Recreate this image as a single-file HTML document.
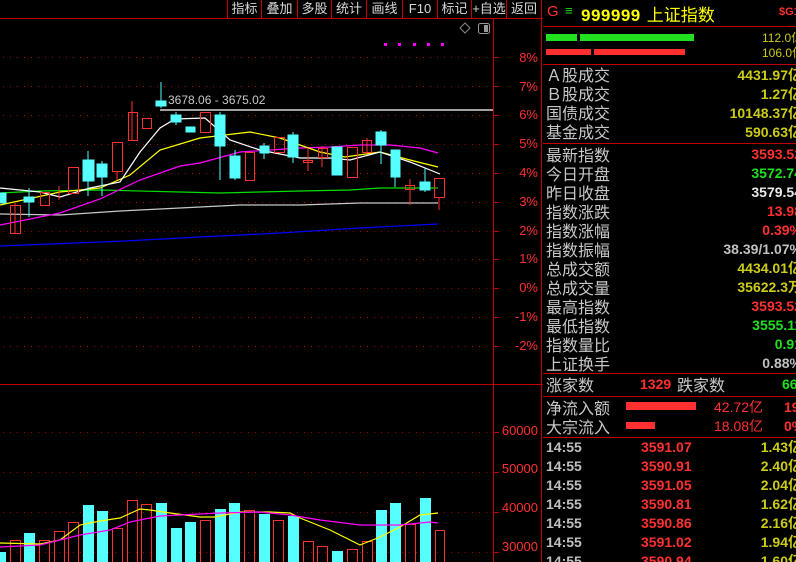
<!DOCTYPE html>
<html><head><meta charset="utf-8"><style>
*{margin:0;padding:0;box-sizing:border-box}
body{width:796px;height:562px;background:#000;overflow:hidden;position:relative;font-family:"Liberation Sans","Noto Sans CJK SC",sans-serif}
.t{position:absolute;white-space:nowrap}
.lab{position:absolute;left:546px;font-size:16px;color:#c8c8c8;line-height:19px;font-family:"Noto Sans CJK SC","WenQuanYi Zen Hei",sans-serif}
.val{position:absolute;right:-6px;font-size:14px;font-weight:bold;line-height:19px;text-align:right;white-space:nowrap}
.y{color:#cccc18}.r{color:#ff3030}.g{color:#20e020}.w{color:#e8e8e8}.gr{color:#c0c0c0}
.tb{position:absolute;top:0;height:18px;font-size:13px;color:#d8d8d8;line-height:18px;text-align:center;border-left:1px solid #c00000}
</style></head><body>
<svg width="796" height="562" style="position:absolute;left:0;top:0">
<g stroke="#c00000" stroke-width="1" fill="none">
<line x1="0" y1="18.5" x2="543" y2="18.5"/>
<line x1="493.5" y1="18" x2="493.5" y2="562"/>
<line x1="0" y1="384.5" x2="543" y2="384.5"/>
<line x1="541.5" y1="0" x2="541.5" y2="562"/>
<line x1="543" y1="26.5" x2="796" y2="26.5"/>
<line x1="543" y1="64.5" x2="796" y2="64.5"/>
<line x1="543" y1="143.5" x2="796" y2="143.5"/>
<line x1="543" y1="373.5" x2="796" y2="373.5"/>
<line x1="543" y1="396.5" x2="796" y2="396.5"/>
<line x1="543" y1="437.5" x2="796" y2="437.5"/>
</g>
<g stroke="#b00000" stroke-dasharray="1,6" stroke-width="1">
<line x1="3" y1="57.5" x2="493" y2="57.5"/><line x1="3" y1="86.5" x2="493" y2="86.5"/><line x1="3" y1="115.5" x2="493" y2="115.5"/><line x1="3" y1="144.5" x2="493" y2="144.5"/><line x1="3" y1="173.5" x2="493" y2="173.5"/><line x1="3" y1="202.5" x2="493" y2="202.5"/><line x1="3" y1="231.5" x2="493" y2="231.5"/><line x1="3" y1="259.5" x2="493" y2="259.5"/><line x1="3" y1="288.5" x2="493" y2="288.5"/><line x1="3" y1="317.5" x2="493" y2="317.5"/><line x1="3" y1="346.5" x2="493" y2="346.5"/>
<line x1="3" y1="432.5" x2="493" y2="432.5"/><line x1="3" y1="472.5" x2="493" y2="472.5"/><line x1="3" y1="512.5" x2="493" y2="512.5"/><line x1="3" y1="552.5" x2="493" y2="552.5"/>
</g>
<g stroke="#c00000"><line x1="493" y1="57.5" x2="499" y2="57.5"/><line x1="493" y1="86.5" x2="499" y2="86.5"/><line x1="493" y1="115.5" x2="499" y2="115.5"/><line x1="493" y1="144.5" x2="499" y2="144.5"/><line x1="493" y1="173.5" x2="499" y2="173.5"/><line x1="493" y1="202.5" x2="499" y2="202.5"/><line x1="493" y1="231.5" x2="499" y2="231.5"/><line x1="493" y1="259.5" x2="499" y2="259.5"/><line x1="493" y1="288.5" x2="499" y2="288.5"/><line x1="493" y1="317.5" x2="499" y2="317.5"/><line x1="493" y1="346.5" x2="499" y2="346.5"/><line x1="493" y1="432.5" x2="499" y2="432.5"/><line x1="493" y1="472.5" x2="499" y2="472.5"/><line x1="493" y1="512.5" x2="499" y2="512.5"/><line x1="493" y1="552.5" x2="499" y2="552.5"/></g>
<line x1="160" y1="110" x2="493" y2="110" stroke="#a0a0a0" stroke-width="2"/>
<g fill="none" stroke-width="1.2">
<polyline stroke="#0000ff" points="0,246 125,241 200,237 280,233 360,228 438,224"/>
<polyline stroke="#c8c8c8" points="0,214 60,215 120,211 180,208 240,205 300,205 360,203 420,203 438,203"/>
<polyline stroke="#00e000" points="0,193 40,191 100,190 180,192 220,193 300,191 350,190 380,188 438,188"/>
<polyline stroke="#ff00ff" points="0,225 60,213 100,199 140,180 180,166 200,163 240,152 270,150 300,148 330,147 360,145 390,145 420,148 438,153"/>
<polyline stroke="#ffff00" points="0,205 60,192 100,188 130,175 160,150 200,138 250,132 280,138 300,145 320,152 345,157 380,152 410,160 438,167"/>
<polyline stroke="#ffffff" points="0,188 40,192 60,197 90,188 120,182 140,152 160,128 175,119 205,118 230,140 260,150 300,158 330,158 350,160 380,152 410,162 440,174"/>
</g>
<g stroke-width="1">
<g fill="#55ffff" stroke="#55ffff">
<rect x="0" y="193" width="6" height="10"/>
<line x1="29" y1="188" x2="29" y2="217"/><rect x="24" y="197" width="10" height="5"/>
<line x1="88" y1="151" x2="88" y2="196"/><rect x="83" y="160" width="11" height="21"/>
<line x1="102" y1="161" x2="102" y2="196"/><rect x="97" y="164" width="10" height="13"/>
<line x1="161" y1="82" x2="161" y2="108"/><rect x="156" y="101" width="10" height="5"/>
<line x1="176" y1="112" x2="176" y2="125"/><rect x="171" y="115" width="10" height="7"/>
<rect x="186" y="127" width="9" height="5"/>
<line x1="220" y1="112" x2="220" y2="180"/><rect x="215" y="115" width="10" height="31"/>
<line x1="235" y1="150" x2="235" y2="180"/><rect x="230" y="156" width="10" height="22"/>
<line x1="264" y1="143" x2="264" y2="159"/><rect x="260" y="146" width="9" height="7"/>
<line x1="293" y1="132" x2="293" y2="163"/><rect x="288" y="135" width="10" height="22"/>
<rect x="332" y="147" width="10" height="28"/>
<line x1="381" y1="130" x2="381" y2="164"/><rect x="376" y="132" width="10" height="13"/>
<line x1="395" y1="150" x2="395" y2="187"/><rect x="391" y="150" width="9" height="27"/>
<line x1="425" y1="168" x2="425" y2="192"/><rect x="420" y="182" width="10" height="8"/>
</g>
<g fill="none" stroke="#ff3030">
<line x1="15" y1="203" x2="15" y2="234"/><rect x="10.5" y="205.5" width="10" height="28"/>
<rect x="40.5" y="192.5" width="9" height="13"/>
<line x1="59" y1="186" x2="59" y2="200"/>
<rect x="68.5" y="167.5" width="10" height="26"/>
<line x1="117" y1="171" x2="117" y2="180"/><rect x="112.5" y="142.5" width="10" height="29"/>
<line x1="132" y1="101" x2="132" y2="141"/><rect x="128.5" y="112.5" width="9" height="28"/>
<rect x="142.5" y="118.5" width="9" height="10"/>
<rect x="200.5" y="112.5" width="10" height="20"/>
<rect x="245.5" y="152.5" width="9" height="28"/>
<rect x="274.5" y="137.5" width="10" height="15"/>
<line x1="308" y1="148" x2="308" y2="171"/><rect x="303.5" y="160.5" width="9" height="2"/>
<line x1="322" y1="146" x2="322" y2="167"/><rect x="318.5" y="148.5" width="9" height="9"/>
<rect x="347.5" y="147.5" width="10" height="30"/>
<line x1="367" y1="138" x2="367" y2="152"/><rect x="362.5" y="140.5" width="9" height="12"/>
<line x1="410" y1="179" x2="410" y2="205"/><rect x="405.5" y="185.5" width="9" height="4"/>
<line x1="439" y1="197" x2="439" y2="210"/><rect x="434.5" y="178.5" width="10" height="19"/>
</g>
</g>
<g fill="#55ffff">
<rect x="0" y="552" width="6" height="10"/><rect x="24" y="533" width="11" height="29"/><rect x="83" y="505" width="11" height="57"/><rect x="97" y="511" width="11" height="51"/><rect x="156" y="503" width="11" height="59"/><rect x="171" y="528" width="11" height="34"/><rect x="185" y="522" width="11" height="40"/><rect x="215" y="509" width="11" height="53"/><rect x="229" y="503" width="11" height="59"/><rect x="259" y="514" width="11" height="48"/><rect x="288" y="516" width="11" height="46"/><rect x="332" y="551" width="11" height="11"/><rect x="376" y="510" width="11" height="52"/><rect x="390" y="503" width="11" height="59"/><rect x="420" y="498" width="11" height="64"/>
</g>
<g fill="none" stroke="#ff3030">
<rect x="10.5" y="540.5" width="10" height="30"/><rect x="39.5" y="540.5" width="10" height="30"/><rect x="54.5" y="531.5" width="10" height="40"/><rect x="68.5" y="522.5" width="10" height="50"/><rect x="112.5" y="528.5" width="10" height="40"/><rect x="127.5" y="500.5" width="10" height="70"/><rect x="141.5" y="504.5" width="10" height="70"/><rect x="200.5" y="520.5" width="10" height="50"/><rect x="244.5" y="510.5" width="10" height="60"/><rect x="273.5" y="520.5" width="10" height="50"/><rect x="303.5" y="541.5" width="10" height="30"/><rect x="317.5" y="546.5" width="10" height="30"/><rect x="347.5" y="549.5" width="10" height="30"/><rect x="362.5" y="541.5" width="10" height="30"/><rect x="405.5" y="524.5" width="10" height="40"/><rect x="435.5" y="530.5" width="9" height="40"/>
</g>
<g fill="none" stroke-width="1.2">
<polyline stroke="#ffff00" points="0,543 40,544 60,540 80,525 100,521 120,518 140,509 150,510 170,513 200,517 215,517 240,512 270,512 290,513 300,518 330,530 360,545 380,537 400,527 420,515 438,513"/>
<polyline stroke="#ff00ff" points="0,547 40,545 80,535 110,530 130,522 160,516 200,514 220,513 260,512 290,515 320,520 360,525 400,525 430,522 438,523"/>
</g>
<path d="M465 23 L470 28 L465 33 L460 28 Z" fill="none" stroke="#888"/>
<rect x="478.5" y="23.5" width="11" height="10" rx="2" fill="none" stroke="#999"/><rect x="484" y="25" width="4" height="7" fill="#999"/>
<g fill="#ff00ff"><rect x="384" y="43" width="3" height="3"/><rect x="398" y="43" width="3" height="3"/><rect x="413" y="43" width="3" height="3"/><rect x="427" y="43" width="3" height="3"/><rect x="441" y="43" width="3" height="3"/></g>
<rect x="546" y="34" width="31" height="7" fill="#20e020"/><rect x="580" y="34" width="114" height="7" fill="#20e020"/>
<rect x="546" y="49" width="45" height="6" fill="#ff3030"/><rect x="594" y="49" width="91" height="6" fill="#ff3030"/>
<rect x="626" y="402" width="70" height="8" fill="#ff3030"/><rect x="626" y="422" width="29" height="7" fill="#ff3030"/>
</svg>
<div class="tb" style="left:227px;width:34px">指标</div>
<div class="tb" style="left:261px;width:36px">叠加</div>
<div class="tb" style="left:297px;width:34px">多股</div>
<div class="tb" style="left:331px;width:35px">统计</div>
<div class="tb" style="left:366px;width:36px">画线</div>
<div class="tb" style="left:402px;width:35px">F10</div>
<div class="tb" style="left:437px;width:34px">标记</div>
<div class="tb" style="left:471px;width:35px">+自选</div>
<div class="tb" style="left:506px;width:35px">返回</div>
<div class="t" style="left:168px;top:93px;font-size:12px;color:#c8c8c8">3678.06 - 3675.02</div>
<div style="position:absolute;left:500px;top:0;width:40px;font-size:13px;color:#ff3030;text-align:right">
<div class="t" style="right:2px;top:50px">8%</div><div class="t" style="right:2px;top:79px">7%</div><div class="t" style="right:2px;top:107px">6%</div><div class="t" style="right:2px;top:136px">5%</div><div class="t" style="right:2px;top:165px">4%</div><div class="t" style="right:2px;top:194px">3%</div><div class="t" style="right:2px;top:223px">2%</div><div class="t" style="right:2px;top:251px">1%</div><div class="t" style="right:2px;top:280px">0%</div><div class="t" style="right:2px;top:309px">-1%</div><div class="t" style="right:2px;top:338px">-2%</div>
<div class="t" style="right:2px;top:423px">60000</div><div class="t" style="right:2px;top:461px">50000</div><div class="t" style="right:2px;top:500px">40000</div><div class="t" style="right:2px;top:539px">30000</div>
</div>
<div style="position:absolute;left:543px;top:0;width:253px;height:562px;overflow:hidden">
<div class="t" style="left:4px;top:3px;font-size:15px;color:#ff3030">G</div>
<div class="t" style="left:22px;top:3px;font-size:13px;color:#20e020">≡</div>
<div class="t" style="left:38px;top:1px;height:24px;display:flex;align-items:baseline;color:#ffff00;font-size:17px">
<span style="font-weight:bold;letter-spacing:0.5px">999999</span><span style="margin-left:6px;font-family:'Noto Sans CJK SC',sans-serif;font-size:17px">上证指数</span></div>
<div class="t" style="left:236px;top:6px;font-size:11px;color:#ff3030;font-weight:bold">$G1</div>
<div class="t" style="left:219px;top:29px;font-size:12px;color:#cccc18">112.0亿</div>
<div class="t" style="left:219px;top:44px;font-size:12px;color:#cccc18">106.0亿</div>
</div>
<div style="position:absolute;left:543px;top:0;width:253px;height:562px;overflow:hidden">
<div class="lab" style="left:3px;top:65px">Ａ股成交</div><div class="val y" style="top:66px">4431.97亿</div>
<div class="lab" style="left:3px;top:84px">Ｂ股成交</div><div class="val y" style="top:85px">1.27亿</div>
<div class="lab" style="left:3px;top:103px">国债成交</div><div class="val y" style="top:104px">10148.37亿</div>
<div class="lab" style="left:3px;top:122px">基金成交</div><div class="val y" style="top:123px">590.63亿</div>
<div class="lab" style="left:3px;top:145px">最新指数</div><div class="val r" style="top:145px">3593.52</div>
<div class="lab" style="left:3px;top:164px">今日开盘</div><div class="val g" style="top:164px">3572.74</div>
<div class="lab" style="left:3px;top:183px">昨日收盘</div><div class="val w" style="top:183px">3579.54</div>
<div class="lab" style="left:3px;top:202px">指数涨跌</div><div class="val r" style="top:202px">13.98</div>
<div class="lab" style="left:3px;top:221px">指数涨幅</div><div class="val r" style="top:221px">0.39%</div>
<div class="lab" style="left:3px;top:240px">指数振幅</div><div class="val gr" style="top:240px">38.39/1.07%</div>
<div class="lab" style="left:3px;top:259px">总成交额</div><div class="val y" style="top:259px">4434.01亿</div>
<div class="lab" style="left:3px;top:278px">总成交量</div><div class="val y" style="top:278px">35622.3万</div>
<div class="lab" style="left:3px;top:297px">最高指数</div><div class="val r" style="top:297px">3593.52</div>
<div class="lab" style="left:3px;top:316px">最低指数</div><div class="val g" style="top:316px">3555.11</div>
<div class="lab" style="left:3px;top:335px">指数量比</div><div class="val g" style="top:335px">0.91</div>
<div class="lab" style="left:3px;top:354px">上证换手</div><div class="val gr" style="top:354px">0.88%</div>
<div class="lab" style="left:3px;top:375px">涨家数</div>
<div class="val r" style="right:auto;left:97px;top:375px">1329</div>
<div class="lab" style="left:134px;top:375px">跌家数</div>
<div class="val g" style="right:auto;left:239px;top:375px">66</div>
<div class="lab" style="left:3px;top:398px">净流入额</div><div class="val r" style="right:auto;left:171px;top:398px;font-weight:normal;font-size:14px">42.72亿</div><div class="val r" style="right:auto;left:241px;top:398px">19</div>
<div class="lab" style="left:3px;top:417px">大宗流入</div><div class="val r" style="right:auto;left:171px;top:417px;font-weight:normal;font-size:14px">18.08亿</div><div class="val r" style="right:auto;left:241px;top:417px">0%</div>
</div>
<div style="position:absolute;left:543px;top:438px;width:253px;height:124px;overflow:hidden;font-size:14px;font-weight:bold;line-height:19.2px">
<div class="t gr" style="left:3px;top:0">14:55</div><div class="t r" style="left:98px;top:0">3591.07</div><div class="t y" style="right:-6px;top:0">1.43亿</div>
<div class="t gr" style="left:3px;top:19px">14:55</div><div class="t r" style="left:98px;top:19px">3590.91</div><div class="t y" style="right:-6px;top:19px">2.40亿</div>
<div class="t gr" style="left:3px;top:38px">14:55</div><div class="t r" style="left:98px;top:38px">3591.05</div><div class="t y" style="right:-6px;top:38px">2.04亿</div>
<div class="t gr" style="left:3px;top:57px">14:55</div><div class="t r" style="left:98px;top:57px">3590.81</div><div class="t y" style="right:-6px;top:57px">1.62亿</div>
<div class="t gr" style="left:3px;top:76px">14:55</div><div class="t r" style="left:98px;top:76px">3590.86</div><div class="t y" style="right:-6px;top:76px">2.16亿</div>
<div class="t gr" style="left:3px;top:95px">14:55</div><div class="t r" style="left:98px;top:95px">3591.02</div><div class="t y" style="right:-6px;top:95px">1.94亿</div>
<div class="t gr" style="left:3px;top:114px">14:55</div><div class="t r" style="left:98px;top:114px">3590.94</div><div class="t y" style="right:-6px;top:114px">1.60亿</div>
</div>
</body></html>
